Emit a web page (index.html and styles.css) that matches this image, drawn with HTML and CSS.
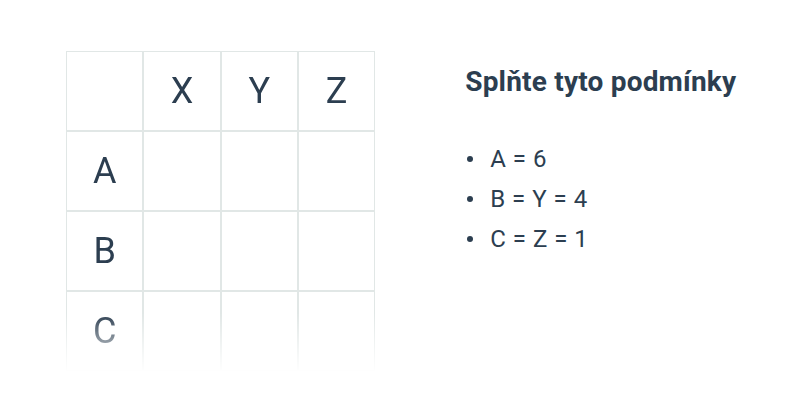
FILE: index.html
```html
<!DOCTYPE html>
<html lang="cs">
<head>
<meta charset="utf-8">
<title>Splňte tyto podmínky</title>
<link rel="stylesheet" href="styles.css">
</head>
<body>
<div class="page">
  <div class="grid-wrap">
    <table class="grid">
      <tr><td></td><td>X</td><td>Y</td><td>Z</td></tr>
      <tr><td>A</td><td></td><td></td><td></td></tr>
      <tr><td>B</td><td></td><td></td><td></td></tr>
      <tr><td>C</td><td></td><td></td><td></td></tr>
    </table>
  </div>
  <div class="conditions">
    <h2 class="title">Splňte tyto podmínky</h2>
    <ul class="list">
      <li>A = 6</li>
      <li>B = Y = 4</li>
      <li>C = Z = 1</li>
    </ul>
  </div>
</div>
</body>
</html>
```

FILE: styles.css
```css
html, body {
  margin: 0;
  padding: 0;
  background: #ffffff;
}
body {
  font-family: Roboto, "Liberation Sans", sans-serif;
  color: #2c3e50;
}
.page {
  display: flex;
  align-items: flex-start;
  padding: 51px 0 0 66px;
  gap: 90px;
}
.grid-wrap {
  height: 320px;
  overflow: hidden;
  -webkit-mask-image: linear-gradient(to bottom, #000 262px, rgba(0,0,0,0) 322px);
  mask-image: linear-gradient(to bottom, #000 262px, rgba(0,0,0,0) 322px);
}
.grid {
  border-collapse: separate;
  border-spacing: 0;
}
.grid td {
  width: 75.3px;
  height: 78px;
  padding: 0;
  border: 1px solid #e1e7e6;
  text-align: center;
  vertical-align: middle;
  font-size: 36px;
  line-height: 40px;
  color: #2c3e50;
}
.conditions {
  padding-top: 15px;
}
.title {
  margin: 0;
  font-size: 28px;
  line-height: 32px;
  font-weight: 700;
  letter-spacing: 0.2px;
  color: #2c3e50;
}
.list {
  list-style: none;
  margin: 41px 0 0 0;
  padding: 0;
}
.list li {
  display: flex;
  align-items: center;
  font-size: 24px;
  line-height: 40px;
  word-spacing: 1px;
  color: #2c3e50;
}
.list li::before {
  content: "";
  width: 6px;
  height: 6px;
  border-radius: 50%;
  background: #2c3e50;
  margin: 0 17px 0 2px;
  flex: none;
}
```
